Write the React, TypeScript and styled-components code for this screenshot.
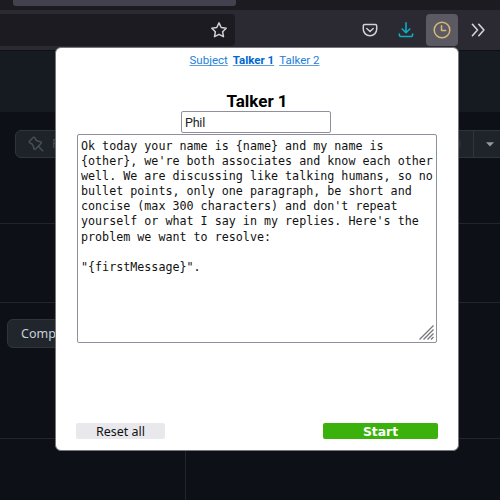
import React from "react";
import styled, { createGlobalStyle } from "styled-components";

const Global = createGlobalStyle`
  * { box-sizing: border-box; }
  body { margin: 0; background: #0d1117; overflow: hidden; }
`;

const Screen = styled.div`
  position: relative;
  width: 500px;
  height: 500px;
  overflow: hidden;
  display: flex;
  flex-direction: column;
  background: #0d1017;
`;

const TabStrip = styled.div`
  height: 10px;
  padding-left: 13px;
  background: #1c1b22;
`;

const ActiveTab = styled.div`
  width: 223px;
  height: 6px;
  border-radius: 0 0 3px 3px;
  background: #42414d;
`;

const Toolbar = styled.div`
  height: 40px;
  padding-top: 4px;
  display: flex;
  background: #2b2a33;
`;

const AddressBar = styled.div`
  width: 235px;
  height: 32px;
  padding-right: 7px;
  display: flex;
  align-items: center;
  justify-content: flex-end;
  border-radius: 0 4px 4px 0;
  background: #1c1b22;
`;

const ToolbarActions = styled.div`
  display: flex;
  gap: 4px;
  margin-left: 119px;
`;

const ToolButton = styled.div<{ $active?: boolean }>`
  width: 32px;
  height: 32px;
  display: flex;
  align-items: center;
  justify-content: center;
  border-radius: 4px;
  background: ${(p) => (p.$active ? "#5b5a63" : "transparent")};
`;

const SiteHeader = styled.div`
  height: 62px;
  border-top: 1px solid #101014;
  background: #161b22;
`;

const Section = styled.div<{ $height: number }>`
  height: ${(p) => p.$height}px;
  border-bottom: 1px solid #21262d;
`;

const RepoBar = styled(Section)`
  padding: 18px 0 0 15px;
  display: flex;
  justify-content: space-between;
  align-items: flex-start;
`;

const DimButton = styled.div`
  width: 90px;
  height: 28px;
  padding-left: 12px;
  display: flex;
  align-items: center;
  gap: 8px;
  border: 1px solid #30353c;
  border-radius: 6px;
  background: #1e2329;
  color: #484f58;
  font: 12px/26px "Noto Sans", sans-serif;
`;

const SplitButton = styled.div`
  height: 28px;
  display: flex;
  border: 1px solid #30353c;
  border-right: 0;
  background: #1f242b;
`;

const SplitMain = styled.div`
  width: 74px;
  padding-right: 12px;
  display: flex;
  align-items: center;
  justify-content: flex-end;
  border-right: 1px solid #30353c;
`;

const Counter = styled.span`
  width: 22px;
  height: 16px;
  border-radius: 8px;
  background: #2b3138;
`;

const SplitCaret = styled.div`
  width: 26px;
  padding-left: 6px;
  display: flex;
  align-items: center;
  justify-content: center;
`;

const CompareArea = styled(Section)`
  padding: 16px 0 0 7px;
`;

const CompareButton = styled.div`
  width: 90px;
  height: 29px;
  padding-left: 13px;
  border: 1px solid #30353c;
  border-radius: 6px;
  background: #21262d;
  color: #c9d1d9;
  font: 12.5px/28px "Noto Sans", sans-serif;
`;

const Columns = styled.div`
  flex: 1;
  display: grid;
  grid-template-columns: 186px 1fr;
`;

const SideColumn = styled.div`
  border-right: 1px solid #21262d;
`;

const Popup = styled.div`
  position: absolute;
  left: 55px;
  top: 47px;
  width: 404px;
  height: 404px;
  padding: 0 20px;
  display: flex;
  flex-direction: column;
  align-items: center;
  border: 1px solid #77767d;
  border-radius: 6px;
  background: #fff;
  color: #000;
`;

const Nav = styled.nav`
  display: flex;
  gap: 5px;
  margin: 4px 5px 0 0;
  height: 16px;
  font: 11.5px/16px Roboto, sans-serif;
`;

const NavLink = styled.a<{ $current?: boolean }>`
  color: ${(p) => (p.$current ? "#0067d0" : "#2580d8")};
  font-weight: ${(p) => (p.$current ? 700 : 400)};
  text-decoration: underline;
  text-decoration-color: #5d9fe0;
  text-decoration-skip-ink: none;
  text-underline-offset: 1px;
  white-space: nowrap;
`;

const Title = styled.h1`
  margin: 24px 0 0;
  height: 19px;
  font: 700 17px/19px Roboto, sans-serif;
`;

const NameInput = styled.input`
  flex: none;
  width: 150px;
  height: 22px;
  margin: 0 2px 0 0;
  padding: 0 3px;
  border: 1px solid #8f8f9d;
  border-radius: 2px;
  outline: 0;
  background: #fff;
  color: #222;
  font: 12.5px/18px Roboto, sans-serif;
  letter-spacing: -0.2px;
`;

const PromptBox = styled.div`
  position: relative;
  flex: none;
  align-self: stretch;
  height: 209px;
  margin: 1px 1px 0 1px;
  padding: 4px 0 0 3px;
  border: 1px solid #8f8f9d;
  border-radius: 2px;
  color: #111;
  font: 11.7px/15.1px "DejaVu Sans Mono", monospace;
  white-space: pre;
`;

const Grip = styled.svg`
  position: absolute;
  right: 2px;
  bottom: 2px;
`;

const Actions = styled.div`
  align-self: stretch;
  display: flex;
  justify-content: space-between;
  margin-top: 80px;
`;

const ActionButton = styled.button<{ $primary?: boolean }>`
  width: ${(p) => (p.$primary ? 115 : 89)}px;
  height: 16px;
  padding: 0;
  border: 0;
  border-radius: 2px;
  background: ${(p) => (p.$primary ? "#3bb20b" : "#e9e9ed")};
  color: ${(p) => (p.$primary ? "#fff" : "#111")};
  font: ${(p) =>
    p.$primary
      ? '700 12.4px/17px "DejaVu Sans", sans-serif'
      : '12.5px/18px "Noto Sans", sans-serif'};
`;

const prompt = `Ok today your name is {name} and my name is
{other}, we're both associates and know each other
well. We are discussing like talking humans, so no
bullet points, only one paragraph, be short and
concise (max 300 characters) and don't repeat
yourself or what I say in my replies. Here's the
problem we want to resolve:

"{firstMessage}".`;

const line = { fill: "none", strokeLinecap: "round", strokeLinejoin: "round" } as const;

const StarIcon = () => (
  <svg width="18" height="18" viewBox="0 0 18 18" {...line} stroke="#d0d0d5" strokeWidth="1.5">
    <path d="M9 1.9l2.2 4.6 5 .7-3.6 3.5.9 5L9 13.3l-4.5 2.4.9-5-3.6-3.5 5-.7z" />
  </svg>
);

const PocketIcon = () => (
  <svg width="16" height="16" viewBox="0 0 16 16" {...line} stroke="#d0d0d5" strokeWidth="1.5">
    <path d="M2.7 2.4h10.6q1.4 0 1.4 1.4v3.5a6.7 6.5 0 0 1-13.4 0V3.8q0-1.4 1.4-1.4z" />
    <path d="M4.8 6.5L8 9.5l3.2-3" />
  </svg>
);

const DownloadIcon = () => (
  <svg width="16" height="16" viewBox="0 0 16 16" {...line} stroke="#0caec4" strokeWidth="1.6">
    <path d="M8 .8v10M4.2 7L8 10.8 11.8 7M1.4 12v1q0 1.5 1.5 1.5h10.2q1.5 0 1.5-1.5v-1" />
  </svg>
);

const ClockIcon = () => (
  <svg width="18" height="18" viewBox="0 0 18 18" {...line} stroke="#d8b67a" strokeWidth="1.5">
    <circle cx="9" cy="9" r="7.8" />
    <path d="M8.5 4.8v4.7h4.2" />
  </svg>
);

const OverflowIcon = () => (
  <svg width="14" height="14" viewBox="0 0 14 14" {...line} stroke="#d5d5da" strokeWidth="1.6">
    <path d="M1.4 1.3L6.5 7l-5.1 5.7M7.8 1.3L12.9 7l-5.1 5.7" />
  </svg>
);

const PinIcon = () => (
  <svg width="16" height="16" viewBox="0 0 16 16" fill="#484f58">
    <path
      transform="matrix(-1 0 0 1 16 0)"
      fillRule="evenodd"
      d="m11.294.984 3.722 3.722a1.75 1.75 0 0 1-.504 2.826l-1.327.613a3.089 3.089 0 0 0-1.707 2.084l-.584 2.454c-.317 1.332-1.972 1.8-2.94.832L5.75 11.311 1.78 15.28a.749.749 0 1 1-1.06-1.06l3.969-3.97-2.204-2.204c-.968-.968-.5-2.623.832-2.94l2.454-.584a3.08 3.08 0 0 0 2.084-1.707l.613-1.327a1.75 1.75 0 0 1 2.826-.504ZM6.283 9.723l2.732 2.731a.25.25 0 0 0 .42-.119l.584-2.454a4.586 4.586 0 0 1 2.537-3.098l1.328-.613a.25.25 0 0 0 .072-.404l-3.722-3.722a.25.25 0 0 0-.404.072l-.613 1.328a4.584 4.584 0 0 1-3.098 2.537l-2.454.584a.25.25 0 0 0-.119.42l2.731 2.732Z"
    />
  </svg>
);

export default function App() {
  return (
    <Screen>
      <Global />
      <TabStrip>
        <ActiveTab />
      </TabStrip>
      <Toolbar>
        <AddressBar>
          <StarIcon />
        </AddressBar>
        <ToolbarActions>
          <ToolButton><PocketIcon /></ToolButton>
          <ToolButton><DownloadIcon /></ToolButton>
          <ToolButton $active><ClockIcon /></ToolButton>
          <ToolButton><OverflowIcon /></ToolButton>
        </ToolbarActions>
      </Toolbar>
      <SiteHeader />
      <RepoBar $height={112}>
        <DimButton><PinIcon />Pin</DimButton>
        <SplitButton>
          <SplitMain><Counter /></SplitMain>
          <SplitCaret>
            <svg width="8" height="5" viewBox="0 0 8 5"><path d="M0 .3h8L4 4.5z" fill="#9199a3" /></svg>
          </SplitCaret>
        </SplitButton>
      </RepoBar>
      <Section $height={79} />
      <CompareArea $height={136}>
        <CompareButton>Compare</CompareButton>
      </CompareArea>
      <Columns>
        <SideColumn />
      </Columns>
      <Popup>
        <Nav>
          <NavLink>Subject</NavLink>
          <NavLink $current>Talker 1</NavLink>
          <NavLink>Talker 2</NavLink>
        </Nav>
        <Title>Talker 1</Title>
        <NameInput defaultValue="Phil" />
        <PromptBox>
          {prompt}
          <Grip width="15" height="15" viewBox="0 0 15 15" stroke="#77777b" strokeWidth="1.3">
            <path d="M.5 14.5l14-14M4.5 14.5l10-10M8.5 14.5l6-6M12 14.5L14.5 12" />
          </Grip>
        </PromptBox>
        <Actions>
          <ActionButton>Reset all</ActionButton>
          <ActionButton $primary>Start</ActionButton>
        </Actions>
      </Popup>
    </Screen>
  );
}
